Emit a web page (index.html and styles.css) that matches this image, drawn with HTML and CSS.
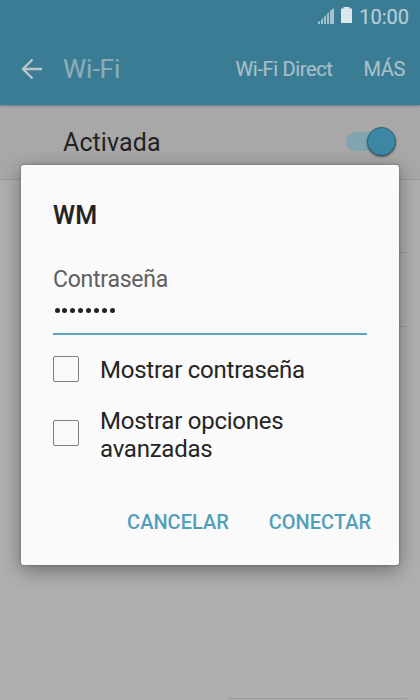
FILE: index.html
```
<!DOCTYPE html>
<html lang="es">
<head>
<meta charset="utf-8">
<title>Wi-Fi</title>
<link rel="stylesheet" href="styles.css">
</head>
<body>
<div class="screen">
  <header class="top">
    <div class="status">
      <svg class="signal" width="17" height="17" viewBox="0 0 17 17"><path d="M0 17v-2l2-1v3zM3 17v-4l2-2v6zM6 17v-7l2-2v9zM9 17v-10l2-2v12zM12 17v-13l4-3v16z"/></svg>
      <svg class="battery" width="11" height="16" viewBox="0 0 11 16"><path d="M0 1.500h2.500V0h6v1.500H11V16H0z"/></svg>
      <span class="clock">10:00</span>
    </div>
    <nav class="bar">
      <svg class="back" width="22" height="22" viewBox="0 0 22 22"><path d="M21 11H2M11.500 1.500L2 11l9.500 9.500"/></svg>
      <h1 class="title">Wi-Fi</h1>
      <span class="direct">Wi-Fi Direct</span>
      <span class="more">MÁS</span>
    </nav>
  </header>
  <section class="enabled">
    <span class="enabled-label">Activada</span>
    <span class="switch"><span class="thumb"></span></span>
  </section>
  <div class="network first"></div>
  <div class="network"></div>
  <div class="network last"></div>
  <div class="dialog">
    <h2 class="ssid">WM</h2>
    <div class="label">Contraseña</div>
    <div class="password"><i></i><i></i><i></i><i></i><i></i><i></i><i></i><i></i></div>
    <div class="option"><span class="box"></span><span class="option-text">Mostrar contraseña</span></div>
    <div class="option advanced"><span class="box"></span><span class="option-text">Mostrar opciones<br>avanzadas</span></div>
    <div class="actions"><span class="cancel">CANCELAR</span><span class="connect">CONECTAR</span></div>
  </div>
</div>
</body>
</html>
```
FILE: styles.css
```
* { box-sizing: border-box; }
body { margin: 0; font-family: Roboto, sans-serif; }
.screen { position: relative; width: 420px; height: 700px; overflow: hidden; background: #afafaf; display: flex; flex-direction: column; }
.top { height: 105px; flex: none; background: #3a7c94; color: #a9bfc8; box-shadow: 0 1px 2px rgba(50,80,95,.5); z-index: 1; }
.status { height: 32px; display: flex; align-items: center; justify-content: flex-end; padding-right: 11px; }
.signal { fill: #a6c3cd; margin-right: 6px; margin-top: -2px; }
.battery { fill: #dce7eb; margin-right: 7px; margin-top: -2px; }
.clock { font-size: 20px; line-height: 24px; color: #b7cdd6; margin-top: 2px; -webkit-text-stroke: .2px #b7cdd6; }
.bar { height: 73px; display: flex; align-items: center; padding: 0 15px 0 21px; }
.back { fill: none; stroke: #bac6ca; stroke-width: 2.400; }
.title { margin: 0 auto 0 20px; font-size: 26px; font-weight: 400; line-height: 30px; color: #8bacb7; -webkit-text-stroke: .2px #8bacb7; }
.direct, .more { font-size: 20px; line-height: 24px; letter-spacing: -.35px; -webkit-text-stroke: .2px #a9bfc8; }
.direct { margin-right: 31px; }
.enabled { height: 75px; flex: none; display: flex; align-items: center; justify-content: space-between; padding: 0 24px 1px 63px; background: #a8a8a8; border-bottom: 1px solid #999; }
.enabled-label { font-size: 25px; line-height: 30px; color: #222; padding-top: 3px; letter-spacing: .1px; }
.switch { width: 50px; height: 19px; border-radius: 10px; background: #81a4b0; display: flex; align-items: center; justify-content: flex-end; }
.thumb { width: 29px; height: 29px; border-radius: 50%; background: #3c88a4; border: 1px solid #2d6478; box-shadow: 0 1px 2px rgba(0,0,0,.5); }
.network { height: 74px; flex: none; margin: 0 13px 0 63px; border-bottom: 1px solid #999; }
.network.first { height: 73px; }
.network.last { height: 372px; margin-left: 229px; }
.dialog { position: absolute; left: 21px; top: 165px; width: 378px; height: 400px; padding: 35px 28px 0 32px; background: #fafafa; border-radius: 3px; box-shadow: 0 5px 20px rgba(0,0,0,.38), 0 0 3px rgba(0,0,0,.3); z-index: 2; }
.ssid { margin: 0; font-size: 25px; font-weight: 500; line-height: 32px; color: #222; letter-spacing: .2px; -webkit-text-stroke: .2px #222; }
.label { margin-top: 33px; font-size: 23px; line-height: 30px; color: #606060; letter-spacing: -.25px; }
.password { width: 314px; height: 40px; display: flex; gap: 2.900px; padding: 12.500px 0 0 1.500px; border-bottom: 2px solid #5aa6c3; }
.password i { width: 5px; height: 5px; border-radius: 50%; background: #222; }
.option { display: flex; align-items: center; margin-top: 17px; height: 34px; color: #252525; }
.box { width: 26px; height: 26px; border: 1px solid #7f7f7f; border-radius: 2px; flex: none; }
.option-text { margin-left: 21px; padding-top: 2px; font-size: 24px; line-height: 28px; letter-spacing: -.24px; white-space: nowrap; }
.advanced { height: 60px; margin-top: 17px; }
.advanced .option-text { padding-top: 4px; }
.actions { display: flex; justify-content: flex-end; margin-top: 47px; font-size: 20px; font-weight: 500; line-height: 24px; color: #529fb9; }
.connect { margin-left: 40px; }
```
